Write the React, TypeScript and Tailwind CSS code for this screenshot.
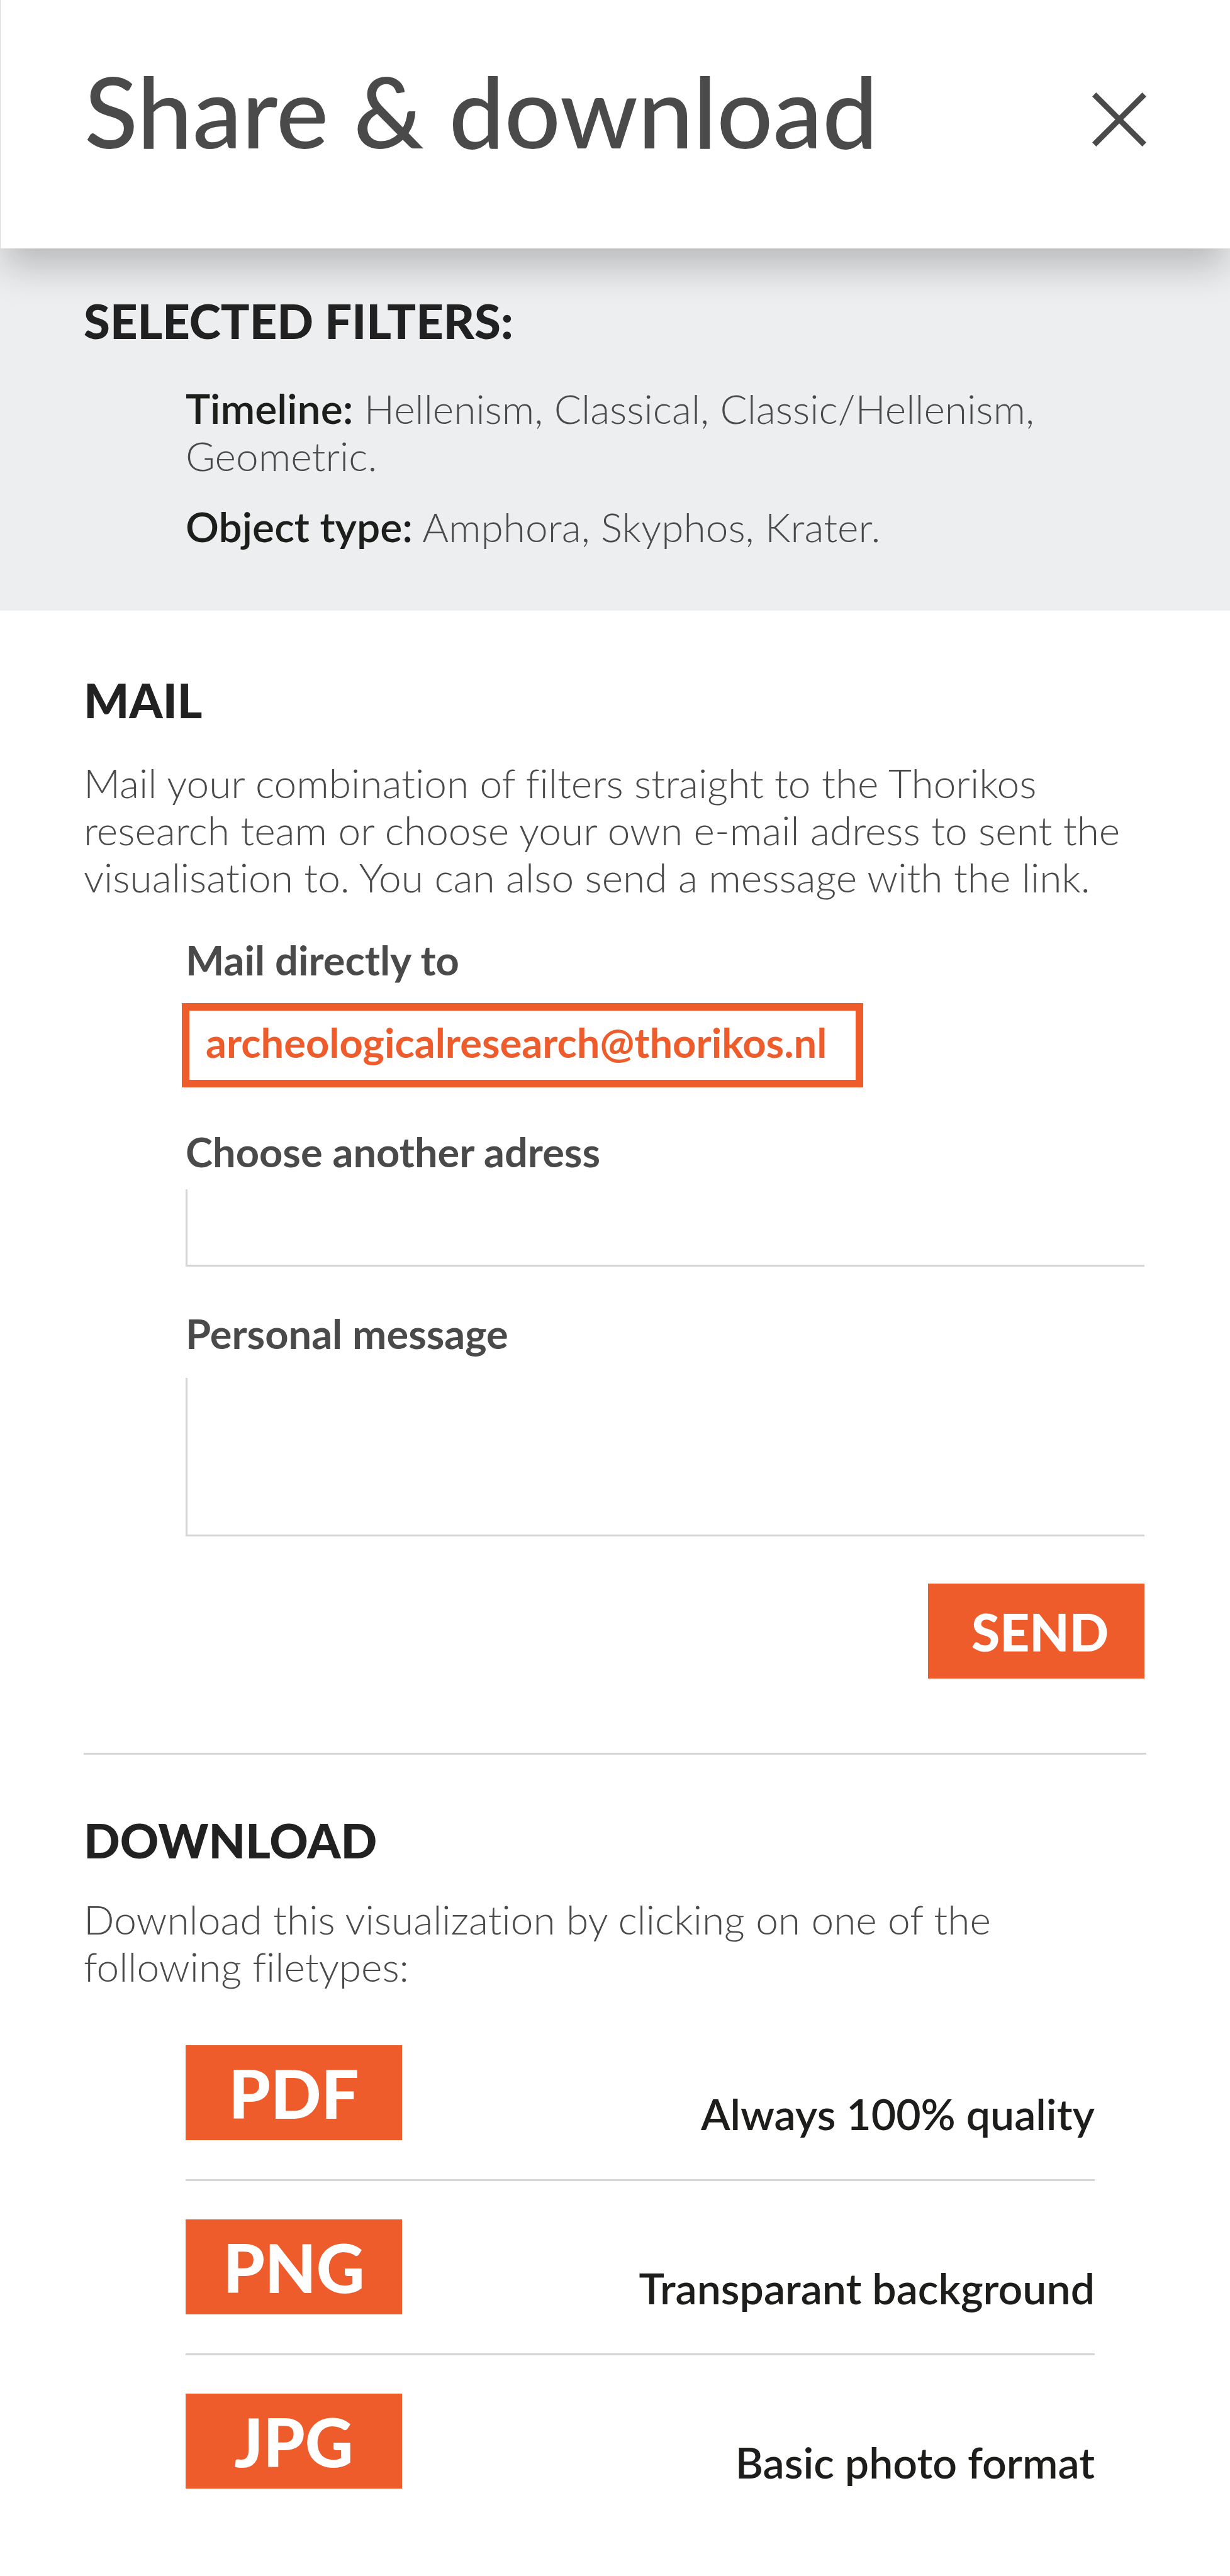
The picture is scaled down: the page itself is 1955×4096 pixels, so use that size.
import { useState } from 'react';

const formats = [
  { name: 'PDF', note: 'Always 100% quality' },
  { name: 'PNG', note: 'Transparant background' },
  { name: 'JPG', note: 'Basic photo format' },
];

function SectionTitle({ children }: { children: string }) {
  return <h2 className="text-[76px] leading-[80px] font-black text-[#212121]">{children}</h2>;
}

function Filter({ label, values }: { label: string; values: string }) {
  return (
    <p className="text-[64px] leading-[75px] font-light">
      <strong className="text-[66px] leading-none font-semibold text-[#1d1d1b]">{label}</strong> {values}
    </p>
  );
}

export default function App() {
  const [address, setAddress] = useState('');
  const [message, setMessage] = useState('');

  return (
    <div className="bg-white font-['Lato',sans-serif] text-[#4a4a4a] [font-variant-ligatures:no-common-ligatures]">
      <header className="relative flex items-start justify-between border-l border-[#dcdcdc] bg-white px-[133px] pt-[95px] pb-[110px] shadow-[0_34px_56px_-5px_rgba(0,0,0,0.22)]">
        <h1 className="text-[157px] leading-[160px] font-medium">Share &amp; download</h1>
        <button type="button" aria-label="Close" className="flex h-[190px] items-center">
          <svg viewBox="0 0 86 86" className="size-[86px]" fill="none" stroke="currentColor" strokeWidth="9">
            <path d="M3.2 3.2 82.8 82.8M82.8 3.2 3.2 82.8" />
          </svg>
        </button>
      </header>

      <section className="bg-[#edeef0] px-[133px] pt-[75px] pb-[96px]">
        <SectionTitle>SELECTED FILTERS:</SectionTitle>
        <div className="mt-[62px] flex flex-col gap-[38px] pl-[162px]">
          <Filter label="Timeline:" values="Hellenism, Classical, Classic/Hellenism, Geometric." />
          <Filter label="Object type:" values="Amphora, Skyphos, Krater." />
        </div>
      </section>

      <main className="px-[133px] pt-[102px] pb-[138px]">
        <section>
          <SectionTitle>MAIL</SectionTitle>
          <p className="mt-[54px] text-[64px] leading-[75px] font-light">
            Mail your combination of filters straight to the Thorikos research team or choose your own e-mail adress to
            sent the visualisation to. You can also send a message with the link.
          </p>
          <form
            className="mt-[54px] flex flex-col pr-[3px] pl-[162px] text-[65px] leading-[80px]"
            onSubmit={(e) => e.preventDefault()}
          >
            <p className="font-bold">Mail directly to</p>
            <a
              href="mailto:archeologicalresearch@thorikos.nl"
              className="mt-[29px] -ml-1.5 w-fit border-12 border-[#ee5c2c] pt-[10px] pr-[46px] pb-[20px] pl-[26px] font-bold text-[#ee5c2c]"
            >
              archeologicalresearch@thorikos.nl
            </a>
            <label htmlFor="address" className="mt-[62px] font-bold">
              Choose another adress
            </label>
            <input
              id="address"
              type="email"
              value={address}
              onChange={(e) => setAddress(e.target.value)}
              className="mt-[20px] h-[123px] w-full border-b-3 border-l-3 border-[#d5d5d5] px-6 outline-none"
            />
            <label htmlFor="message" className="mt-[66px] font-bold">
              Personal message
            </label>
            <textarea
              id="message"
              value={message}
              onChange={(e) => setMessage(e.target.value)}
              className="mt-[31px] h-[252px] w-full resize-none border-b-3 border-l-3 border-[#d5d5d5] px-6 outline-none"
            />
            <button
              type="submit"
              className="mt-[75px] h-[151px] w-[344px] self-end bg-[#ee5c2c] pl-3 text-[82px] font-black text-white"
            >
              SEND
            </button>
          </form>
        </section>

        <section className="mt-[118px] border-t-3 border-[#d5d5d5] pt-[96px]">
          <SectionTitle>DOWNLOAD</SectionTitle>
          <p className="mt-[48px] max-w-[1500px] text-[64px] leading-[75px] font-light">
            Download this visualization by clicking on one of the following filetypes:
          </p>
          <ul className="mt-[88px] flex flex-col gap-[61px] pr-[82px] pl-[162px]">
            {formats.map((f) => (
              <li
                key={f.name}
                className="flex items-end justify-between border-b-3 border-[#d5d5d5] pb-[62px] last:border-b-0 last:pb-0"
              >
                <button type="button" className="h-[151px] w-[344px] bg-[#ee5c2c] text-[106px] leading-[120px] font-black text-white">
                  {f.name}
                </button>
                <span className="text-[68px] leading-[84px] font-semibold text-[#1d1d1b]">{f.note}</span>
              </li>
            ))}
          </ul>
        </section>
      </main>
    </div>
  );
}
